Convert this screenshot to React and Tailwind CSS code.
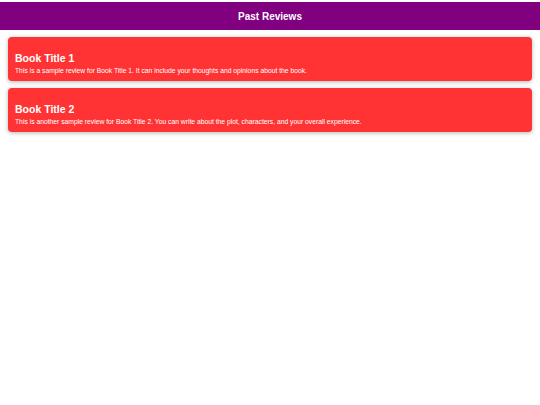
import React from 'react';

const reviews = [
    { id: 1, title: 'Book Title 1', text: 'This is a sample review for Book Title 1. It can include your thoughts and opinions about the book.' },
    { id: 2, title: 'Book Title 2', text: 'This is another sample review for Book Title 2. You can write about the plot, characters, and your overall experience.' },
];

const ReviewCard = ({ title, text }) => (
    <div className="bg-[#ff3333] rounded-[4px] shadow-[0_1px_4px_rgba(0,0,0,0.3)] px-[7px] pt-[15px] pb-[6px] text-white">
        <h2 className="text-[10.5px] font-bold leading-[12px]">{title}</h2>
        <p className="text-[6.75px] leading-[8px] mt-[3px]">{text}</p>
    </div>
);

export default function App() {
    return (
        <div className="min-h-[405px] bg-white pt-[2px]" style={{ fontFamily: '"Liberation Sans", Arial, sans-serif' }}>
            <header className="bg-[#800080] h-[28px] flex items-center justify-center">
                <h1 className="text-white text-[10px] font-bold">Past Reviews</h1>
            </header>
            <div className="flex flex-col gap-[7px] px-[8px] pt-[7px]">
                {reviews.map(r => (
                    <ReviewCard key={r.id} title={r.title} text={r.text} />
                ))}
            </div>
        </div>
    );
}
